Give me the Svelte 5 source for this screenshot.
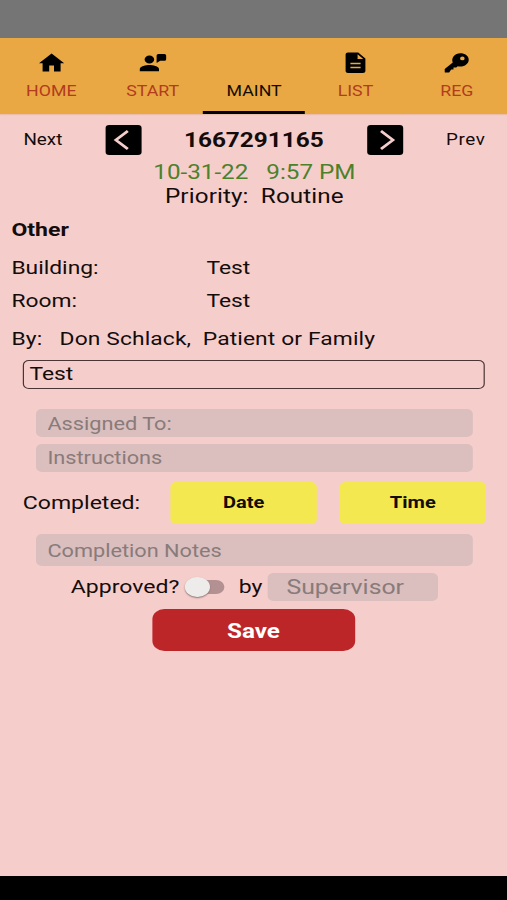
<script lang="ts">
	interface Tab {
		name: string
		icon?: string
	}

	const tabs: Tab[] = [
		{ name: 'HOME', icon: 'M10 20.500v-6h4v6h5.500v-8.300H22.500L12 2.500 1.500 12.200H4.500v8.300z' },
		{ name: 'START', icon: 'M13.500 8.500a4 4 0 1 1-8 0 4 4 0 0 1 8 0zM9.500 14c-2.700 0-8 1.300-8 4v2.300h16V18c0-2.700-5.300-4-8-4zM17 3h5a1.500 1.500 0 0 1 1.500 1.500v3.700A1.500 1.500 0 0 1 22 9.700h-3.500L15.500 12V4.500A1.500 1.500 0 0 1 17 3z' },
		{ name: 'MAINT' },
		{ name: 'LIST', icon: 'M14.500 1.500H6c-1.100 0-2 .9-2 2v16.500c0 1.100.9 2 2 2h12.500c1.100 0 2-.9 2-2V7.500zM16.500 17.300H8v-1.500h8.500zM16.500 13.300H8v-1.500h8.500zM14 8V3.300L18.700 8z' },
		{ name: 'REG', icon: 'M21.600 8.700c0 3.900-3.200 6.800-7 6.800-.8 0-1.500-.1-2.200-.3l-1.200 1.300H8.900v1.900H7L5.300 21.500H2.200Q1.600 21.500 1.600 20.900V17.900l6.700-6.400A6.800 6.800 0 0 1 14.600 2.300c3.800 0 7 2.600 7 6.400zM18.200 7.400a1.900 1.900 0 1 0-3.800 0 1.900 1.900 0 0 0 3.800 0z' }
	];

	let active = $state('MAINT');
	let approved = $state(false);
</script>

<div class="screen">
	<div class="status"></div>
	<nav>
		{#each tabs as tab}
			<button class="tab" class:active={active === tab.name} onclick={() => active = tab.name}>
				<span class="icon">
					{#if tab.icon}
						<svg viewBox="0 0 24 24"><path fill-rule="evenodd" d={tab.icon} /></svg>
					{/if}
				</span>
				<span class="label">{tab.name}</span>
			</button>
		{/each}
	</nav>

	<main>
		<div class="pager">
			<span class="side">Next</span>
			<button class="arrow" aria-label="Next"><svg viewBox="0 0 30 30"><path d="M18.500 6 8.500 15l10 9" /></svg></button>
			<h1>1667291165</h1>
			<button class="arrow" aria-label="Prev"><svg viewBox="0 0 30 30"><path d="M11.500 6l10 9-10 9" /></svg></button>
			<span class="side right">Prev</span>
		</div>
		<div class="date">10-31-22   9:57 PM</div>
		<div class="priority">Priority:  Routine</div>

		<h2>Other</h2>
		<div class="row"><span>Building:</span><span>Test</span></div>
		<div class="row"><span>Room:</span><span>Test</span></div>
		<div class="by">By:   Don Schlack,  Patient or Family</div>
		<div class="description">Test</div>

		<input class="field" placeholder="Assigned To:" />
		<input class="field" placeholder="Instructions" />
		<div class="completed">
			<span>Completed:</span>
			<button>Date</button>
			<button>Time</button>
		</div>
		<input class="field notes" placeholder="Completion Notes" />
		<div class="approved">
			<span>Approved?</span>
			<button class="switch" class:on={approved} aria-label="Approved" onclick={() => approved = !approved}><i></i></button>
			<span>by</span>
			<input class="supervisor" placeholder="Supervisor" />
		</div>
		<button class="save">Save</button>
	</main>
	<footer></footer>
</div>

<style>
	:global(body) {
		margin: 0;
		overflow: hidden;
	}

	.screen {
		display: flex;
		flex-direction: column;
		width: 422.5px;
		height: 900px;
		transform: scaleX(1.2);
		transform-origin: 0 0;
		background: #f5cecb;
		color: #130c0b;
		font: 19px/24px Roboto, sans-serif;
	}

	button, input {
		box-sizing: border-box;
		margin: 0;
		padding: 0;
		border: 0;
		font: inherit;
		color: inherit;
	}

	.status {
		height: 38px;
		background: #757575;
	}

	nav {
		display: flex;
		height: 76px;
		background: #e9a843;
		box-shadow: 0 1px 1px #e8b9a5;
	}

	.tab {
		flex: 1;
		display: flex;
		flex-direction: column;
		align-items: center;
		box-sizing: border-box;
		padding: 13px 0 0 1px;
		border-bottom: 3px solid transparent;
		background: none;
		color: #b23c1e;
		font-size: 14.8px;
	}

	.tab.active {
		border-color: #000;
		color: #130c00;
	}

	.icon {
		height: 24px;
		margin-bottom: 4px;
	}

	.icon svg {
		display: block;
		width: 24px;
		height: 24px;
		fill: #000;
	}

	main {
		flex: 1;
		display: flex;
		flex-direction: column;
		padding-top: 11px;
	}

	.pager {
		display: flex;
		align-items: center;
		height: 30px;
		padding: 0 18px 0 19.5px;
	}

	.side {
		width: 68px;
		font-size: 15.7px;
	}

	.right {
		width: 69px;
		text-align: right;
		letter-spacing: .5px;
	}

	.arrow {
		width: 30px;
		height: 30px;
		border-radius: 3px;
		background: #000;
	}

	.arrow svg {
		display: block;
		fill: none;
		stroke: #f5cecb;
		stroke-width: 2.4;
	}

	h1, h2 {
		margin: 0;
		font-weight: bold;
	}

	h1 {
		flex: 1;
		text-align: center;
		font-size: 20.3px;
	}

	.date, .priority {
		height: 24px;
		padding-left: 1.5px;
		text-align: center;
		font-size: 20.2px;
		white-space: pre;
	}

	.date {
		margin-top: 5px;
		color: #4c812b;
	}

	.priority {
		letter-spacing: .1px;
	}

	h2 {
		margin: 10px 9.5px 0;
		font-size: 19.2px;
	}

	.row {
		display: flex;
		margin: 14px 9.5px 0;
	}

	.row + .row {
		margin-top: 9px;
	}

	.row span:first-child {
		width: 162.5px;
	}

	.by {
		margin: 14px 9.5px 0;
		white-space: pre;
		letter-spacing: .1px;
	}

	.description {
		box-sizing: border-box;
		height: 29px;
		margin: 9px 18.5px 20px 19px;
		padding: 1px 0 0 4.5px;
		border: 1px solid #4b3534;
		border-radius: 5px;
	}

	.field {
		height: 28px;
		margin: 0 28.5px 6.5px 29.5px;
		padding: 0 10px;
		border-radius: 5px;
		background: #dbbebe;
		font-size: 18.1px;
	}

	input::placeholder {
		color: #887b7a;
		opacity: 1;
	}

	.completed {
		display: flex;
		align-items: center;
		margin: 4px 17.5px 10px 19px;
	}

	.completed span {
		flex: 1;
		font-size: 19.2px;
	}

	.completed button {
		width: 122px;
		height: 42px;
		margin-left: 19px;
		border-radius: 5px;
		background: #f4e850;
		color: #130c00;
		font-size: 16.7px;
		font-weight: bold;
	}

	.notes {
		height: 32px;
		margin-bottom: 6px;
	}

	.approved {
		display: flex;
		align-items: center;
		height: 29px;
		padding-left: 59px;
		font-size: 19.2px;
	}

	.switch {
		display: flex;
		align-items: center;
		width: 33px;
		height: 14px;
		margin: 0 11.5px 0 5px;
		border-radius: 7px;
		background: linear-gradient(90deg, transparent 30%, #b39092 30%);
	}

	.switch i {
		width: 20.5px;
		height: 20px;
		border-radius: 50%;
		background: #eeecea;
		box-shadow: 0 1px 1.5px #8d7473;
	}

	.switch.on i {
		margin-left: 12px;
	}

	.supervisor {
		width: 142px;
		height: 28px;
		margin-left: 4.5px;
		padding: 0 15.5px;
		border-radius: 5px;
		background: #dbbebe;
		font-size: 20.7px;
	}

	.save {
		align-self: center;
		width: 169px;
		height: 42px;
		margin-top: 7.5px;
		padding-top: 2px;
		border-radius: 10px;
		background: #bd2628;
		color: #fff;
		font-size: 20.2px;
		font-weight: bold;
	}

	footer {
		height: 24px;
		background: #000;
	}
</style>
